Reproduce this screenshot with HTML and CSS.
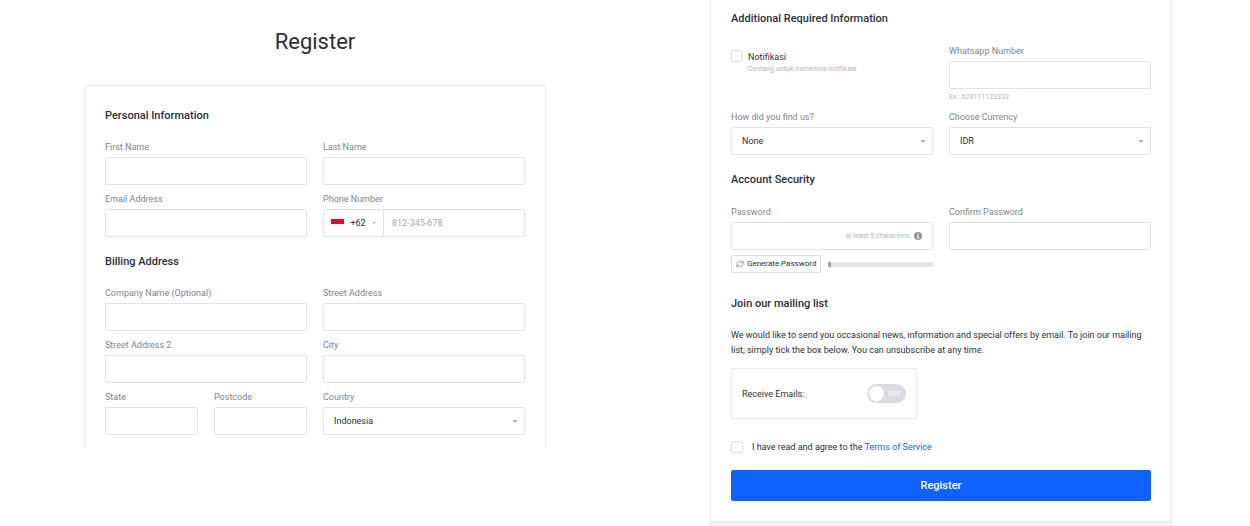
FILE: index.html
```
<!DOCTYPE html>
<html lang="en">
<head>
<meta charset="utf-8">
<meta name="viewport" content="width=device-width, initial-scale=1">
<title>Register</title>
<link rel="stylesheet" href="styles.css">
</head>
<body>
<form class="page">
  <div class="column">
    <h1 class="title">Register</h1>
    <div class="card card-start">
      <section class="section">
        <h2 class="heading">Personal Information</h2>
        <div class="fields">
          <div class="field"><label for="first">First Name</label><input class="control" id="first" type="text"></div>
          <div class="field"><label for="last">Last Name</label><input class="control" id="last" type="text"></div>
          <div class="field"><label for="email">Email Address</label><input class="control" id="email" type="email"></div>
          <div class="field">
            <label for="phone">Phone Number</label>
            <div class="control phone">
              <button class="dial" type="button" aria-label="Country code +62"><span class="flag"></span><span>+62</span><span class="caret caret-small"></span></button>
              <input class="bare" id="phone" type="tel" placeholder="812-345-678">
            </div>
          </div>
        </div>
      </section>
      <section class="section">
        <h2 class="heading">Billing Address</h2>
        <div class="fields">
          <div class="field"><label for="company">Company Name (Optional)</label><input class="control" id="company" type="text"></div>
          <div class="field"><label for="street">Street Address</label><input class="control" id="street" type="text"></div>
          <div class="field"><label for="street2">Street Address 2</label><input class="control" id="street2" type="text"></div>
          <div class="field"><label for="city">City</label><input class="control" id="city" type="text"></div>
          <div class="fields">
            <div class="field"><label for="state">State</label><input class="control" id="state" type="text"></div>
            <div class="field"><label for="postcode">Postcode</label><input class="control" id="postcode" type="text"></div>
          </div>
          <div class="field">
            <label for="country">Country</label>
            <div class="picker"><select class="control" id="country"><option>Indonesia</option></select><span class="caret"></span></div>
          </div>
        </div>
      </section>
    </div>
  </div>

  <div class="column">
    <div class="card card-end">
      <section class="section">
        <h2 class="heading">Additional Required Information</h2>
        <div class="fields">
          <div class="notify">
            <input class="check" id="notify" type="checkbox">
            <div class="notify-text"><label for="notify">Notifikasi</label><span class="hint">Centang untuk menerima notifikasi</span></div>
          </div>
          <div class="field"><label for="whatsapp">Whatsapp Number</label><input class="control" id="whatsapp" type="tel"><span class="hint">Ex : 628111123333</span></div>
          <div class="field">
            <label for="source">How did you find us?</label>
            <div class="picker"><select class="control" id="source"><option>None</option></select><span class="caret"></span></div>
          </div>
          <div class="field">
            <label for="currency">Choose Currency</label>
            <div class="picker"><select class="control" id="currency"><option>IDR</option></select><span class="caret"></span></div>
          </div>
        </div>
      </section>
      <section class="section">
        <h2 class="heading">Account Security</h2>
        <div class="fields">
          <div class="field">
            <label for="password">Password</label>
            <div class="control secret">
              <input class="bare" id="password" type="password">
              <span class="hint">at least 5 characters</span>
              <svg class="info" viewBox="0 0 16 16" aria-hidden="true"><circle cx="8" cy="8" r="8" fill="#8f959f"/><path d="M7 3h2.4v2.2H7zM6 6.600h3.400v4.800h1V13H5.800v-1.600H7V8.200H6z" fill="#fff"/></svg>
            </div>
          </div>
          <div class="field"><label for="confirm">Confirm Password</label><input class="control" id="confirm" type="password"></div>
        </div>
        <div class="fields strength">
          <div class="generate">
            <button class="generate-button" type="button">
              <svg class="refresh" viewBox="0 0 16 16" fill="none" stroke="#8c919a" stroke-width="1.600" aria-hidden="true"><path d="M13.500 5.500A6.300 6.300 0 0 0 2 6.500M2.500 10.500A6.300 6.300 0 0 0 14 9.500M14.500 1.500v4.300h-4.300M1.500 14.500v-4.300h4.300M13.800 6.500v2.300M2.200 9.500V7.200"/></svg>
              Generate Password
            </button>
            <div class="bar" role="progressbar" aria-label="Password strength" aria-valuenow="2"><span class="bar-fill" style="width: 2%"></span></div>
          </div>
        </div>
      </section>
      <section class="section mailing">
        <h2 class="heading">Join our mailing list</h2>
        <p class="copy">We would like to send you occasional news, information and special offers by email. To join our mailing list, simply tick the box below. You can unsubscribe at any time.</p>
        <div class="receive">
          <label for="receive">Receive Emails:</label>
          <span class="switch"><input class="switch-input" id="receive" type="checkbox" role="switch"><span class="switch-text">OFF</span></span>
        </div>
      </section>
      <div class="terms">
        <input class="check" id="terms" type="checkbox">
        <span><label for="terms">I have read and agree to the</label> <a class="link" href="#">Terms of Service</a></span>
      </div>
      <button class="submit" type="submit">Register</button>
    </div>
    <div class="card-footer"></div>
  </div>
</form>
</body>
</html>
```

FILE: styles.css
```
* { box-sizing: border-box; }

body {
  margin: 0;
  background: #fff;
  color: #2b303b;
  font: 9px/14px Roboto, sans-serif;
}

input, select, button { font: inherit; color: inherit; margin: 0; }

.page {
  display: grid;
  grid-template-columns: 1fr 1fr;
  gap: 164px;
  align-items: start;
  padding: 0 78px 0 84px;
}

.title {
  margin: 27px 0 28px;
  font-size: 22px;
  font-weight: 400;
  line-height: 30px;
  text-align: center;
}

.card { border: solid #e9ebee; padding: 0 20px; }
.card-start { border-width: 1px 1px 0; border-radius: 3px 3px 0 0; padding-top: 22px; padding-bottom: 13px; }
.card-end { border-width: 0 1px; padding-top: 11px; padding-bottom: 20px; }
.card-footer { height: 5px; background: #f4f6f8; border: 1px solid #e4e6ea; border-bottom: 0; }

.section + .section { margin-top: 17px; }
.section + .mailing { margin-top: 23px; }

.heading { margin: 0 0 16px; font-size: 11px; font-weight: 500; line-height: 16px; }
.card-end .heading { margin-bottom: 17px; }

.fields { display: grid; grid-template-columns: 1fr 1fr; gap: 7px 16px; }

.field { display: flex; flex-direction: column; gap: 3px; min-width: 0; color: #7f848d; }

.control {
  width: 100%;
  height: 28px;
  padding: 0 10px;
  border: 1px solid #e1e3e6;
  border-radius: 2px;
  background: #fff;
  color: #2b303b;
}

.picker { display: grid; align-items: center; }
.picker > * { grid-area: 1 / 1; }
.picker select { appearance: none; }

.caret {
  justify-self: end;
  margin-right: 7px;
  border: solid transparent;
  border-width: 3px 3px 0;
  border-top-color: #b0b4ba;
  pointer-events: none;
}

.caret-small { margin: 0; border-width: 2px 2px 0; }

.phone, .secret { display: flex; align-items: center; padding: 0; }

.dial {
  display: flex;
  align-items: center;
  justify-content: space-between;
  width: 60px;
  height: 100%;
  padding: 0 7px;
  border: 0;
  border-right: 1px solid #e1e3e6;
  background: none;
}

.flag { width: 13px; height: 9px; background: linear-gradient(#d80f2c 5px, #f7f7f7 5px); }

.bare { flex: 1; min-width: 0; height: 100%; padding: 0 8px; border: 0; background: none; }
.bare::placeholder { color: #a8acb3; opacity: 1; }

.hint { color: #b2b6bc; font-size: 7px; line-height: 11px; }

.info { width: 8px; height: 8px; margin: 0 10px 0 5px; }

.check {
  appearance: none;
  flex: none;
  width: 12px;
  height: 12px;
  border: 1px solid #d9dce1;
  border-radius: 2px;
  background: #fff;
}

.notify { display: flex; align-items: start; gap: 5px; padding-top: 6px; }
.notify-text { display: flex; flex-direction: column; }

.strength { margin-top: 5px; }
.generate { display: flex; align-items: center; gap: 7px; }

.generate-button {
  display: flex;
  align-items: center;
  gap: 3px;
  height: 18px;
  padding: 0 4px;
  border: 1px solid #dcdee3;
  border-radius: 2px;
  background: #fff;
  font-size: 8px;
  white-space: nowrap;
}

.refresh { width: 8px; height: 8px; }

.bar { flex: 1; height: 5px; border-radius: 1px; background: #e3e5eb; overflow: hidden; }
.bar-fill { display: block; height: 100%; background: #a0a4ad; }

.mailing .heading { margin-bottom: 16px; }
.copy { margin: 0; line-height: 15px; }

.receive {
  display: flex;
  align-items: center;
  justify-content: space-between;
  width: 186px;
  height: 51px;
  margin-top: 10px;
  padding: 0 10px;
  border: 1px solid #e9ebee;
  border-radius: 2px;
}

.switch { display: grid; align-items: center; }
.switch > * { grid-area: 1 / 1; }

.switch-input {
  appearance: none;
  width: 39px;
  height: 19px;
  padding: 2px;
  border-radius: 10px;
  background: #d9dbe1;
}

.switch-input::before {
  content: "";
  display: block;
  width: 15px;
  height: 15px;
  border-radius: 50%;
  background: #fff;
}

.switch-text { justify-self: end; margin-right: 5px; color: #fff; font-size: 7px; pointer-events: none; }

.terms { display: flex; align-items: center; gap: 9px; margin-top: 21px; }
.link { color: #1062fe; text-decoration: none; }

.submit {
  display: block;
  width: 100%;
  height: 31px;
  margin-top: 16px;
  border: 0;
  border-radius: 2px;
  background: #0f62fe;
  color: #fff;
  font-size: 11px;
  font-weight: 500;
}
```
